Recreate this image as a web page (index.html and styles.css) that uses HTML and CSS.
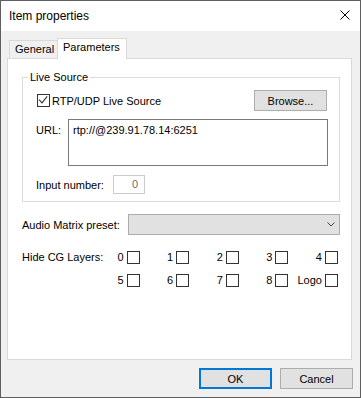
FILE: index.html
```html
<!DOCTYPE html>
<html>
<head>
<meta charset="utf-8">
<title>Item properties</title>
<link rel="stylesheet" href="styles.css">
</head>
<body>
<div class="window">
  <div class="titlebar">
    <span class="title">Item properties</span>
    <svg class="close" width="10" height="10" viewBox="0 0 10 10"><path d="M0.5 0.5L9.5 9.5M9.5 0.5L0.5 9.5" stroke="#000" stroke-width="1" fill="none"/></svg>
  </div>
  <div class="body">
    <div class="tabs">
      <div class="tab">General</div>
      <div class="tab active">Parameters</div>
    </div>
    <div class="panel">
      <fieldset class="group">
        <legend>Live Source</legend>
        <div class="row-check">
          <label class="check"><span class="box"><svg width="11" height="11" viewBox="0 0 11 11"><path d="M1 4.6L4 7.8L9.2 1.4" stroke="#333" stroke-width="1.1" fill="none"/></svg></span>RTP/UDP Live Source</label>
          <button class="btn">Browse...</button>
        </div>
        <div class="row-url">
          <span class="lbl-url">URL:</span>
          <div class="textarea">rtp://@239.91.78.14:6251</div>
        </div>
        <div class="row-input">
          <span class="lbl-input">Input number:</span>
          <div class="num">0</div>
        </div>
      </fieldset>
      <div class="audio">
        <span class="lbl-audio">Audio Matrix preset:</span>
        <div class="combo"><svg width="8" height="5" viewBox="0 0 8 5"><path d="M0.5 0.5L4 4L7.5 0.5" stroke="#444" stroke-width="1" fill="none"/></svg></div>
      </div>
      <div class="layers">
        <span class="lbl-layers">Hide CG Layers:</span>
        <div class="layers-grid">
          <div class="cell">0<span class="box"></span></div>
          <div class="cell">1<span class="box"></span></div>
          <div class="cell">2<span class="box"></span></div>
          <div class="cell">3<span class="box"></span></div>
          <div class="cell">4<span class="box"></span></div>
          <div class="cell">5<span class="box"></span></div>
          <div class="cell">6<span class="box"></span></div>
          <div class="cell">7<span class="box"></span></div>
          <div class="cell">8<span class="box"></span></div>
          <div class="cell">Logo<span class="box"></span></div>
        </div>
      </div>
    </div>
    <div class="footer">
      <button class="btn ok">OK</button>
      <button class="btn">Cancel</button>
    </div>
  </div>
</div>
</body>
</html>
```

FILE: styles.css
```css
* { box-sizing: border-box; }
html, body { margin: 0; padding: 0; }
body {
  font-family: "Liberation Sans", Arial, sans-serif;
  font-size: 11px;
  color: #000;
  background: #fff;
}
.window {
  width: 361px;
  height: 398px;
  border: 1px solid #5f5f5f;
  display: flex;
  flex-direction: column;
  background: #f0f0f0;
}
.titlebar {
  height: 30px;
  flex: none;
  background: #fff;
  display: flex;
  align-items: center;
  justify-content: space-between;
  padding: 0 10px 0 8px;
  font-size: 12px;
}
.close { display: block; margin-top: -2px; }
.body {
  flex: 1;
  display: flex;
  flex-direction: column;
  padding: 7px 0 8px 6px;
}
.tabs {
  height: 20px;
  flex: none;
  display: flex;
  align-items: flex-end;
  padding-left: 2px;
}
.tab {
  height: 18px;
  width: 49px;
  margin-right: -1px;
  border: 1px solid #d9d9d9;
  border-bottom: none;
  background: #f0f0f0;
  padding-left: 5px;
  line-height: 17px;
}
.tab.active {
  width: 70px;
  height: 21px;
  margin-bottom: -1px;
  background: #fff;
  position: relative;
  z-index: 1;
}
.panel {
  height: 302px;
  flex: none;
  margin-right: 8px;
  border: 1px solid #d9d9d9;
  background: #fff;
  padding: 11px 11px 0 14px;
}
.group {
  margin: 0;
  min-width: 0;
  border: 1px solid #dcdcdc;
  padding: 6px 11px 7px 14px;
}
.group legend {
  padding: 0 2px;
  margin-left: -9px;
  line-height: 14px;
}
.row-check {
  height: 21px;
  display: flex;
  align-items: center;
  justify-content: space-between;
}
.check {
  display: flex;
  align-items: center;
}
.box {
  display: block;
  flex: none;
  width: 13px;
  height: 13px;
  border: 1px solid #333;
  background: #fff;
}
.box svg { display: block; }
.check .box { margin-right: 2px; }
.btn {
  width: 73px;
  height: 21px;
  padding: 0;
  border: 1px solid #adadad;
  background: #e1e1e1;
  font: inherit;
  color: #000;
}
.row-check .btn { margin-right: 1px; }
.row-url {
  display: flex;
  margin-top: 8px;
}
.lbl-url {
  width: 32px;
  margin-left: -1px;
  padding-top: 4px;
  line-height: 14px;
}
.textarea {
  flex: 1;
  height: 47px;
  border: 1px solid #7a7a7a;
  padding: 3px 4px;
  line-height: 14px;
  background: #fff;
}
.row-input {
  display: flex;
  align-items: center;
  margin-top: 9px;
  height: 19px;
}
.lbl-input {
  width: 77px;
  margin-left: -1px;
}
.num {
  width: 32px;
  height: 19px;
  border: 1px solid #cccccc;
  text-align: right;
  padding-right: 6px;
  line-height: 17px;
  color: #6d6d6d;
}
.audio {
  display: flex;
  align-items: center;
  margin-top: 12px;
  height: 21px;
}
.lbl-audio { width: 106px; white-space: nowrap; }
.combo {
  width: 212px;
  height: 21px;
  border: 1px solid #adadad;
  background: #e1e1e1;
  display: flex;
  align-items: center;
  justify-content: flex-end;
  padding-right: 4px;
}
.combo svg { display: block; }
.layers {
  display: flex;
  align-items: flex-start;
  margin-top: 16px;
}
.lbl-layers {
  width: 68px;
  flex: none;
  line-height: 13px;
  white-space: nowrap;
}
.layers-grid {
  width: 248px;
  display: grid;
  grid-template-columns: repeat(5, 1fr);
  row-gap: 10px;
}
.cell {
  height: 13px;
  line-height: 13px;
  display: flex;
  justify-content: flex-end;
  align-items: center;
  gap: 3px;
}
.footer {
  display: flex;
  justify-content: flex-end;
  gap: 8px;
  margin-top: 8px;
  padding-right: 7px;
}
.btn.ok {
  border: 2px solid #0078d7;
}
```
